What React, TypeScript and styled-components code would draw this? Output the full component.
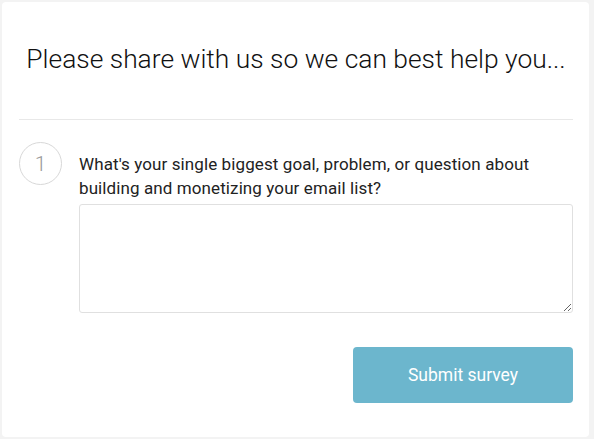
import styled, { createGlobalStyle } from 'styled-components';

const GlobalStyle = createGlobalStyle`
  html, body {
    margin: 0;
    padding: 0;
    background: #f3f3f3;
    font-family: Roboto, "Helvetica Neue", Arial, sans-serif;
  }
`;

const Page = styled.div`
  padding: 2px 5px 2px 2px;
`;

const Card = styled.form`
  box-sizing: border-box;
  width: 587px;
  height: 435px;
  background: #fff;
  border-radius: 4px;
  padding: 0 16px 0 17px;
  display: flex;
  flex-direction: column;
`;

const Header = styled.div`
  height: 117px;
  border-bottom: 1px solid #e8e8e8;
  display: flex;
  align-items: center;
  justify-content: center;
`;

const Title = styled.h1`
  margin: 0 0 4px;
  font-size: 26.4px;
  font-weight: 300;
  color: #111;
  white-space: nowrap;
`;

const Question = styled.div`
  display: flex;
  gap: 17px;
  margin-top: 22px;
`;

const Step = styled.div`
  flex: none;
  box-sizing: border-box;
  width: 43px;
  height: 43px;
  border: 1px solid #d8d8d8;
  border-radius: 50%;
  display: flex;
  align-items: center;
  justify-content: center;
  font-size: 21px;
  font-weight: 300;
  color: #999;
`;

const Body = styled.div`
  flex: 1;
  display: flex;
  flex-direction: column;
`;

const Label = styled.label`
  font-size: 17px;
  line-height: 24px;
  letter-spacing: 0.1px;
  color: #222;
  padding-top: 10px;
`;

const Answer = styled.textarea`
  box-sizing: border-box;
  width: 494px;
  height: 109px;
  margin-top: 4px;
  border: 1px solid #e0e0e0;
  border-radius: 3px;
  resize: vertical;
  font-family: inherit;
  font-size: 15px;
  outline: none;
`;

const Actions = styled.div`
  display: flex;
  justify-content: flex-end;
  margin-top: 34px;
`;

const Submit = styled.button`
  width: 220px;
  height: 56px;
  border: none;
  border-radius: 4px;
  background: #6cb6cd;
  color: #fff;
  font-family: inherit;
  font-size: 17.5px;
  font-weight: 400;
  cursor: pointer;
`;

export default function App() {
  return (
    <>
      <GlobalStyle />
      <Page>
        <Card onSubmit={(e) => e.preventDefault()}>
          <Header>
            <Title>Please share with us so we can best help you...</Title>
          </Header>
          <Question>
            <Step>1</Step>
            <Body>
              <Label htmlFor="goal">
                What's your single biggest goal, problem, or question about building and monetizing your email list?
              </Label>
              <Answer id="goal" />
            </Body>
          </Question>
          <Actions>
            <Submit type="submit">Submit survey</Submit>
          </Actions>
        </Card>
      </Page>
    </>
  );
}
